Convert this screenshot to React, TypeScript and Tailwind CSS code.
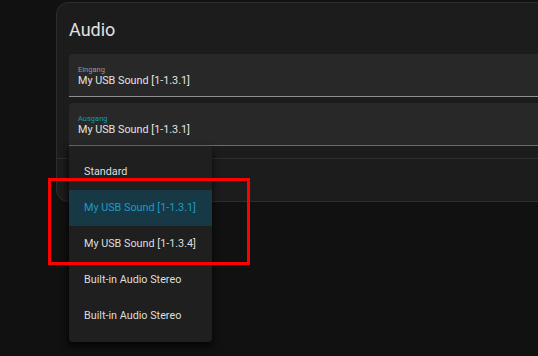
import React from "react";

const options = [
  "Standard",
  "My USB Sound [1-1.3.1]",
  "My USB Sound [1-1.3.4]",
  "Built-in Audio Stereo",
  "Built-in Audio Stereo",
];

const Field = ({ label, value, active }: { label: string; value: string; active?: boolean }) => (
  <div
    className={`h-[43px] rounded-t-[4px] bg-[#282828] px-[9px] pt-[11px] border-b ${
      active ? "border-[#0f8db3]" : "border-[#8f8f8f]"
    }`}
  >
    <div className={`text-[7.5px] leading-[9px] ${active ? "text-[#1a95bc]" : "text-[#9a9a9a]"}`}>{label}</div>
    <div className="text-[10.8px] leading-[14px] whitespace-nowrap text-[#e3e3e3]">{value}</div>
  </div>
);

export default function App() {
  return (
    <div className="relative w-[538px] h-[356px] overflow-hidden bg-[#111111] font-['Roboto',sans-serif]">
      {/* settings card */}
      <div className="mt-[2px] ml-[56px] w-[620px] h-[200px] rounded-[12px] border border-[#2d2d2d] bg-[#1c1c1c] flex flex-col">
        <div className="px-[12px] pt-[15px] pb-[12px] text-[18px] leading-[24px] text-[#e1e1e1]">Audio</div>
        <div className="px-[12px] flex flex-col gap-[6px]">
          <Field label="Eingang" value="My USB Sound [1-1.3.1]" />
          <Field label="Ausgang" value="My USB Sound [1-1.3.1]" active />
        </div>
        <div className="mt-[12px] border-t border-[#2e2e2e] flex-1" />
      </div>

      {/* open select menu */}
      <div className="absolute left-[69px] top-[146px] w-[143px] py-[8px] rounded-b-[4px] bg-[#1f1f1f] shadow-[0_5px_8px_rgba(0,0,0,0.6),-2px_2px_4px_rgba(0,0,0,0.35)]">
        {options.map((opt, i) => (
          <div
            key={i}
            className={`h-[36px] px-[15px] flex items-center whitespace-nowrap text-[10.8px] ${
              i === 1 ? "bg-[#163945] text-[#1e9ac4]" : "text-[#dedede]"
            }`}
          >
            {opt}
          </div>
        ))}
      </div>

      {/* highlight marker */}
      <div className="absolute left-[48px] top-[178px] w-[202px] h-[87px] border-[3px] border-[#ff0000]" />
    </div>
  );
}
